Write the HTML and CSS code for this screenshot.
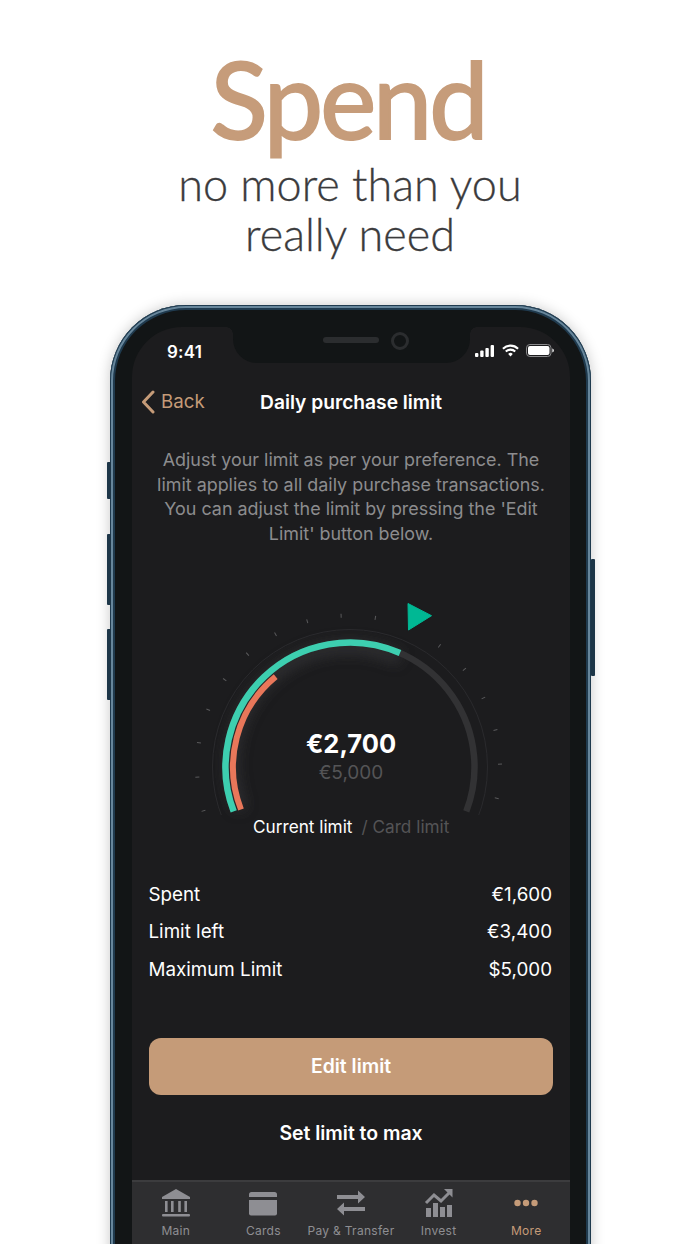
FILE: index.html
```html
<!DOCTYPE html>
<html lang="en">
<head>
<meta charset="utf-8">
<title>Spend</title>
<link rel="stylesheet" href="styles.css">
</head>
<body>
<header class="hero">
  <h1 class="hero-title">Spend</h1>
  <p class="hero-sub">no more than you<br>really need</p>
</header>
<div class="phone">
  <span class="btn btn-mute"></span>
  <span class="btn btn-up"></span>
  <span class="btn btn-down"></span>
  <span class="btn btn-power"></span>
  <div class="notch">
    <span class="speaker"></span>
    <span class="camera"></span>
  </div>
  <main class="screen">
    <div class="status">
      <span class="time">9:41</span>
      <div class="status-icons">
        <svg class="ico-signal" viewBox="0 0 20 12"><rect x="0" y="8" width="3.4" height="4" rx="1"/><rect x="5.2" y="5.6" width="3.4" height="6.4" rx="1"/><rect x="10.4" y="3" width="3.4" height="9" rx="1"/><rect x="15.6" y="0" width="3.4" height="12" rx="1"/></svg>
        <svg class="ico-wifi" viewBox="0 0 18 13"><path d="M1 4.6a11.4 11.4 0 0 1 16 0" class="wifi-arc"/><path d="M4 7.6a7.2 7.2 0 0 1 10 0" class="wifi-arc"/><path d="M6.6 10.1a3.4 3.4 0 0 1 4.8 0L9 12.8z" class="wifi-dot"/></svg>
        <svg class="ico-batt" viewBox="0 0 28 13"><rect x=".5" y=".5" width="24.5" height="12" rx="3.4" class="batt-case"/><rect x="2" y="2" width="21.5" height="9" rx="2" class="batt-fill"/><path d="M26.4 4.6c.9.3 1.4 1 1.4 1.9s-.5 1.6-1.4 1.9z" class="batt-fill"/></svg>
      </div>
    </div>
    <nav class="navbar">
      <a class="back">
        <svg class="ico-back" viewBox="0 0 14 24"><path d="M12 2 2.5 12 12 22"/></svg>
        <span>Back</span>
      </a>
      <h2 class="nav-title">Daily purchase limit</h2>
    </nav>
    <p class="intro">Adjust your limit as per your preference. The limit applies to all daily purchase transactions. You can adjust the limit by pressing the 'Edit Limit' button below.</p>
    <section class="gauge">
      <svg class="gauge-svg" viewBox="0 0 340 250">
        <defs>
          <filter id="glow" x="-20%" y="-20%" width="140%" height="140%"><feGaussianBlur stdDeviation="7"/></filter>
          <clipPath id="ringclip"><rect x="0" y="0" width="340" height="225"/></clipPath>
        </defs>
        <path class="arc-glow" filter="url(#glow)" d="M61 219.5A117 117 0 0 1 220 69"/>
        <circle class="ring" cx="170" cy="177" r="137.5" clip-path="url(#ringclip)"/>
        <g class="ticks">
          <line x1="168.500" y1="27.500" x2="168.500" y2="23.500" transform="rotate(-106.8 168.500 177)"/>
          <line x1="168.500" y1="27.500" x2="168.500" y2="23.500" transform="rotate(-93.8 168.500 177)"/>
          <line x1="168.500" y1="27.500" x2="168.500" y2="23.500" transform="rotate(-80.8 168.500 177)"/>
          <line x1="168.500" y1="27.500" x2="168.500" y2="23.500" transform="rotate(-67.8 168.500 177)"/>
          <line x1="168.500" y1="27.500" x2="168.500" y2="23.500" transform="rotate(-54.8 168.500 177)"/>
          <line x1="168.500" y1="27.500" x2="168.500" y2="23.500" transform="rotate(-41.8 168.500 177)"/>
          <line x1="168.500" y1="27.500" x2="168.500" y2="23.500" transform="rotate(-28.8 168.500 177)"/>
          <line x1="168.500" y1="27.500" x2="168.500" y2="23.500" transform="rotate(-15.8 168.500 177)"/>
          <line x1="168.500" y1="27.500" x2="168.500" y2="23.500" transform="rotate(-2.8 168.500 177)"/>
          <line x1="168.500" y1="27.500" x2="168.500" y2="23.500" transform="rotate(10.2 168.500 177)"/>
          <line x1="168.500" y1="27.500" x2="168.500" y2="23.500" transform="rotate(36.9 168.500 177)"/>
          <line x1="168.500" y1="27.500" x2="168.500" y2="23.500" transform="rotate(49.9 168.500 177)"/>
          <line x1="168.500" y1="27.500" x2="168.500" y2="23.500" transform="rotate(62.9 168.500 177)"/>
          <line x1="168.500" y1="27.500" x2="168.500" y2="23.500" transform="rotate(75.9 168.500 177)"/>
          <line x1="168.500" y1="27.500" x2="168.500" y2="23.500" transform="rotate(88.9 168.500 177)"/>
          <line x1="168.500" y1="27.500" x2="168.500" y2="23.500" transform="rotate(101.9 168.500 177)"/>
        </g>
        <path class="arc arc-track" d="M53.7 221.4A124.5 124.5 0 1 1 286.3 221.4"/>
        <path class="arc arc-teal" d="M53.7 221.4A124.5 124.5 0 0 1 220 63"/>
        <path class="arc arc-orange" d="M61 219.5A117 117 0 0 1 95.7 86.6"/>
        <path class="pointer" d="M228 13.500 251.500 25.700 228.500 40z"/>
      </svg>
      <div class="gauge-values">
        <strong class="val-current">€2,700</strong>
        <span class="val-card">€5,000</span>
      </div>
      <div class="gauge-legend">
        <span class="legend-current">Current limit</span>
        <span class="legend-card">/ Card limit</span>
      </div>
    </section>
    <dl class="rows">
      <div class="row"><dt>Spent</dt><dd>€1,600</dd></div>
      <div class="row"><dt>Limit left</dt><dd>€3,400</dd></div>
      <div class="row"><dt>Maximum Limit</dt><dd>$5,000</dd></div>
    </dl>
    <button class="cta">Edit limit</button>
    <a class="set-max">Set limit to max</a>
    <div class="tabs">
      <a class="tab">
        <svg class="tab-ico" viewBox="0 0 30 30"><path d="M15 1 29 9v2H1V9z"/><rect x="4" y="13" width="2.6" height="11"/><rect x="10" y="13" width="2.6" height="11"/><rect x="17.2" y="13" width="2.6" height="11"/><rect x="23.4" y="13" width="2.6" height="11"/><rect x="1" y="26" width="28" height="2.4" rx="1"/></svg>
        <span>Main</span>
      </a>
      <a class="tab">
        <svg class="tab-ico" viewBox="0 0 30 30"><path d="M1 6.500A2.500 2.500 0 0 1 3.500 4h23A2.500 2.500 0 0 1 29 6.500V9H1z"/><path d="M1 12h28v13.500a2 2 0 0 1-2 2H3a2 2 0 0 1-2-2z"/></svg>
        <span>Cards</span>
      </a>
      <a class="tab">
        <svg class="tab-ico" viewBox="0 0 30 30"><path d="M1 7h21V2.500L29 9l-7 6.500V11H1z"/><path d="M29 19H8v-4.500L1 21l7 6.500V23h21z"/></svg>
        <span>Pay &amp; Transfer</span>
      </a>
      <a class="tab">
        <svg class="tab-ico" viewBox="0 0 30 30"><rect x="2" y="20" width="5" height="9"/><rect x="9" y="15" width="5" height="14"/><rect x="16" y="19" width="5" height="10"/><rect x="23" y="17" width="5" height="12"/><path class="invest-line" d="M2 15 10 7l7 6 9-9"/><path d="M20 1h8.500v8.500z"/></svg>
        <span>Invest</span>
      </a>
      <a class="tab tab-active">
        <svg class="tab-ico" viewBox="0 0 30 30"><circle cx="6.500" cy="15" r="3.200"/><circle cx="15" cy="15" r="3.200"/><circle cx="23.500" cy="15" r="3.200"/></svg>
        <span>More</span>
      </a>
    </div>
  </main>
</div>
</body>
</html>
```
FILE: styles.css
```css
* { box-sizing: border-box; }
html, body { margin: 0; height: 1244px; overflow: hidden; background: #fff; }
body { font-family: Inter, "Liberation Sans", sans-serif; }

.hero { height: 305px; padding-top: 37px; text-align: center; color: #3b3b3d; }
.hero-title { margin: 0; padding-right: 4px; font: 400 106px/122px Lato, sans-serif; letter-spacing: -3px; -webkit-text-stroke: 2px #c69c7a; color: #c69c7a; }
.hero-sub { margin: 0; font: 300 45px/50px Lato, sans-serif; -webkit-text-stroke: .3px #3b3b3d; }

.phone {
  position: relative;
  width: 481px;
  height: 1000px;
  margin-left: 110px;
  padding: 22px 21px 0 22px;
  background: #121516;
  border-radius: 76px 76px 0 0;
  box-shadow: inset 0 0 0 1px #1f3a4e, inset 0 0 0 3px #67869b, inset 0 0 0 5px #1f3a4e, 0 0 14px rgba(0,0,0,.22);
}
.btn { position: absolute; width: 4px; background: #1d3648; border-radius: 1px; }
.btn-mute { left: -3px; top: 157px; height: 37px; }
.btn-up { left: -3px; top: 229px; height: 71px; }
.btn-down { left: -3px; top: 324px; height: 71px; }
.btn-power { right: -4px; top: 254px; height: 117px; }

.notch {
  position: absolute;
  z-index: 2;
  left: 123px;
  top: 22px;
  width: 237px;
  height: 36px;
  background: #121516;
  border-radius: 0 0 24px 24px;
}
.notch::before, .notch::after { content: ""; position: absolute; top: 0; width: 7px; height: 7px; }
.notch::before { left: -7px; background: radial-gradient(circle at 0 100%, transparent 6.500px, #121516 7px); }
.notch::after { right: -7px; background: radial-gradient(circle at 100% 100%, transparent 6.500px, #121516 7px); }
.speaker { position: absolute; left: 90px; top: 10px; width: 56px; height: 6px; border-radius: 3px; background: #2b2d2f; }
.camera { position: absolute; left: 158px; top: 5px; width: 18px; height: 18px; border-radius: 50%; border: 3px solid #2b2d2f; }

.screen {
  position: relative;
  height: 978px;
  display: flex;
  flex-direction: column;
  background: #1c1c1e;
  border-radius: 50px 50px 0 0;
  overflow: hidden;
  color: #fff;
}
.status { height: 48px; display: flex; justify-content: space-between; align-items: flex-start; padding: 15px 16px 0 35px; }
.time { font-size: 17px; line-height: 20px; font-weight: 600; letter-spacing: .2px; }
.status-icons { display: flex; align-items: center; gap: 7px; margin-top: 2px; }
.ico-signal { width: 20px; height: 12px; fill: #fff; }
.ico-wifi { width: 17px; height: 13px; }
.wifi-arc { fill: none; stroke: #fff; stroke-width: 2.2; }
.wifi-dot { fill: #fff; }
.ico-batt { width: 28px; height: 13px; }
.batt-case { fill: none; stroke: #8a8a8c; }
.batt-fill { fill: #fff; }

.navbar { position: relative; height: 54px; display: flex; align-items: center; justify-content: center; }
.back { position: absolute; left: 9px; top: 15px; display: flex; align-items: center; gap: 6px; font-size: 18.700px; line-height: 24px; color: #c59b78; }
.ico-back { width: 14px; height: 24px; fill: none; stroke: #c59b78; stroke-width: 3; stroke-linecap: round; stroke-linejoin: round; }
.nav-title { margin: 0; font-size: 19.200px; line-height: 24px; font-weight: 600; }

.intro { margin: 19px 20px 0; font-size: 17.900px; line-height: 24.700px; text-align: center; color: #8c8c8e; }

.gauge { position: relative; flex: none; height: 250px; margin-top: 42px; }
.gauge-svg { position: absolute; left: 48px; top: 1.500px; width: 340px; height: 250px; }
.arc-glow { fill: none; stroke: #3a3a3c; stroke-width: 12; opacity: .7; }
.ring { fill: none; stroke: #2a2a2d; stroke-width: 1; }
.ticks line { stroke: #5a5a5c; stroke-width: 1; }
.arc { fill: none; stroke-width: 6.500; }
.arc-track { stroke: #323234; }
.arc-teal { stroke: #3dcfb0; }
.arc-orange { stroke: #e8775a; stroke-width: 6; }
.pointer { fill: #00b894; stroke: #00b894; stroke-width: 1; stroke-linejoin: round; }
.gauge-values { position: absolute; left: 0; right: 0; top: 139px; display: flex; flex-direction: column; align-items: center; }
.val-current { font-size: 25.500px; line-height: 32px; font-weight: 700; }
.val-card { font-size: 19px; line-height: 26px; color: #545456; }
.gauge-legend { position: absolute; left: 121px; top: 226px; display: flex; gap: 9px; font-size: 17.200px; line-height: 24px; white-space: nowrap; }
.legend-card { color: #545456; }

.rows { margin: 37px 18px 0 16.500px; }
.row { display: flex; justify-content: space-between; height: 37.500px; font-size: 18.800px; line-height: 37.500px; }
.row dd { margin: 0; }

.cta { display: block; flex: none; width: 404px; height: 57px; margin: 50px 0 0 17px; padding: 0; border: 0; border-radius: 12px; background: #c59b78; color: #fff; font: 600 19.400px/57px Inter, sans-serif; }
.set-max { margin-top: 26px; text-align: center; font-size: 19.400px; line-height: 24px; font-weight: 600; }

.tabs { flex: none; display: grid; grid-template-columns: repeat(5, minmax(0, 1fr)); height: 70px; margin-top: 35px; border-top: 2px solid #3c3c3e; background: #2e2e30; }
.tab { display: flex; flex-direction: column; align-items: center; padding-top: 6px; font-size: 12px; line-height: 16px; letter-spacing: .3px; color: #8e8e93; white-space: nowrap; }
.tab-ico { width: 30px; height: 30px; fill: #8e8e93; margin-bottom: 5px; }
.invest-line { fill: none; stroke: #8e8e93; stroke-width: 3; }
.tab-active { color: #c59b78; }
.tab-active .tab-ico { fill: #c59b78; }
```
